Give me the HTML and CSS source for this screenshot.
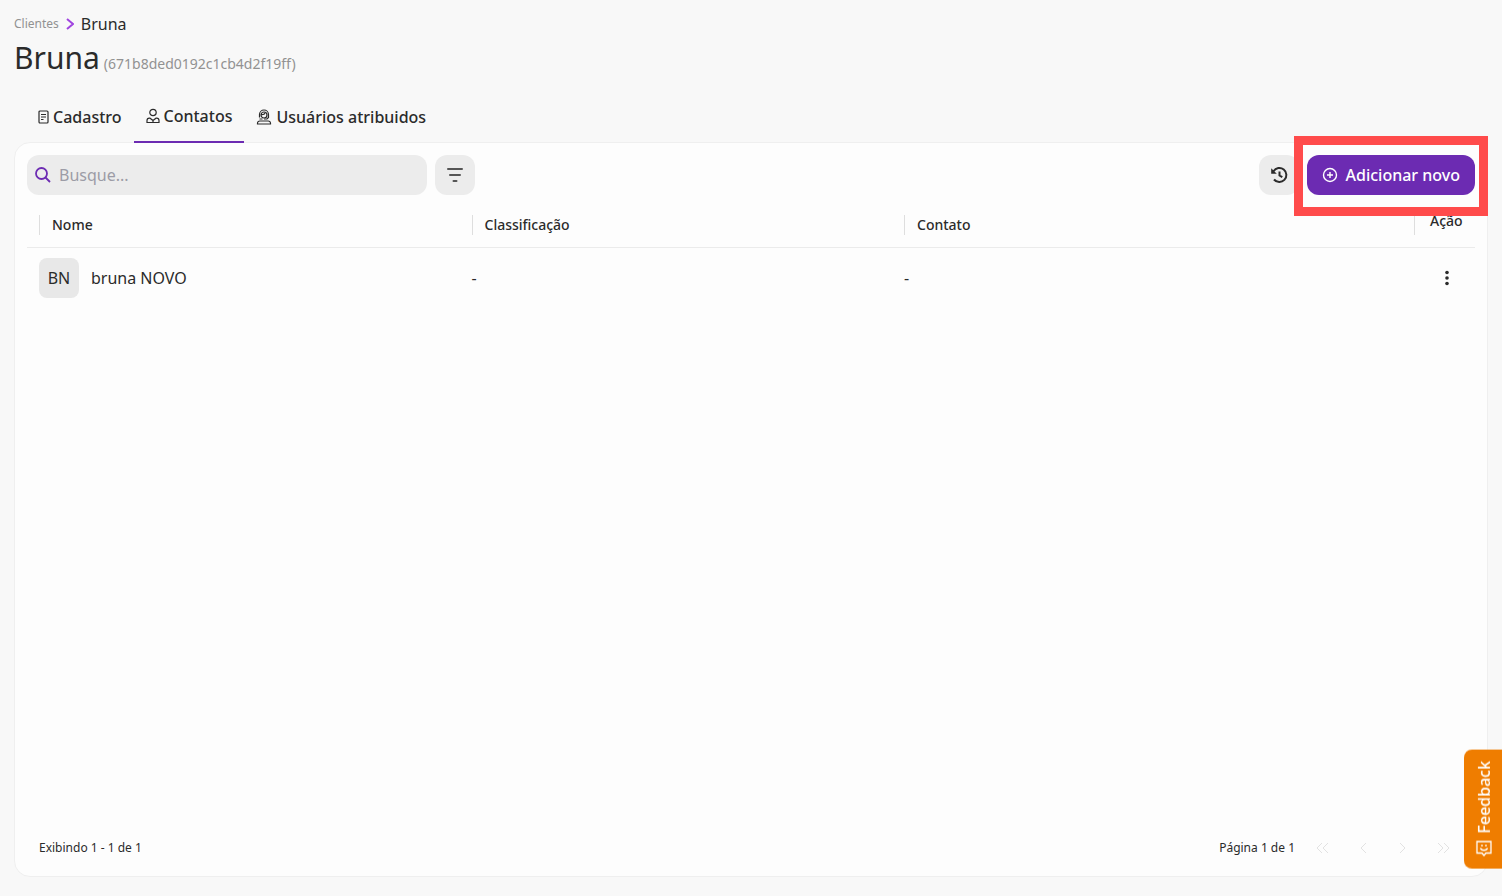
FILE: index.html
```html
<!DOCTYPE html>
<html lang="pt-BR">
<head>
    <meta charset="UTF-8">
    <meta name="viewport" content="width=device-width, initial-scale=1.0">
    <title>Bruna - Clientes</title>
    <link rel="stylesheet" href="styles.css">
</head>
<body>
    <header>
        <nav class="breadcrumb" aria-label="Navegação">
            <a href="#clientes">Clientes</a>
            <svg width="8" height="12" viewBox="0 0 8 12"><path d="M1 1l6 5-6 5"/></svg>
            <span>Bruna</span>
        </nav>
        <div class="title">
            <h1>Bruna</h1>
            <span class="client-id">(671b8ded0192c1cb4d2f19ff)</span>
        </div>
    </header>

    <nav class="tabs">
        <a href="#cadastro" class="tab">
            <svg width="12" height="14" viewBox="0 0 12 14"><rect x="1" y="1" width="9" height="12" rx="1"/><path d="M3 4.500h5M3 7h5M3 9.500h2.500"/></svg>
            Cadastro
        </a>
        <a href="#contatos" class="tab active">
            <svg width="14" height="16" viewBox="0 0 14 16"><circle cx="7" cy="4.500" r="3.200"/><path d="M1 14.500v-2a2.300 2.300 0 0 1 2.300-2.300h.7l3 2.300 3-2.300h.7a2.300 2.300 0 0 1 2.300 2.300v2zM7 12.500v2"/></svg>
            Contatos
        </a>
        <a href="#usuarios" class="tab">
            <svg width="16" height="16" viewBox="0 0 16 16"><circle cx="8" cy="6" r="3"/><path d="M3.500 8.500V5.500a4.500 4.500 0 0 1 9 0v3l-1.500 1.500H8M3.500 10h3M1.500 15v-.8a2.200 2.200 0 0 1 2.200-2.200h8.600a2.200 2.200 0 0 1 2.200 2.200v.8zM5 5.500c2 .3 3.500-.2 4.300-1.800"/></svg>
            Usuários atribuidos
        </a>
    </nav>

    <main class="panel">
        <div class="toolbar">
            <label class="search">
                <svg width="16" height="16" viewBox="0 0 16 16"><circle cx="6.500" cy="6.500" r="5.500"/><path d="M10.500 10.500l4.500 4.500"/></svg>
                <input type="text" placeholder="Busque..." aria-label="Busque">
            </label>
            <button type="button" class="icon-button" aria-label="Filtrar">
                <svg width="16" height="14" viewBox="0 0 16 14"><path class="filter" d="M1 1h14M3 7h10M6.500 13h3"/></svg>
            </button>
            <button type="button" class="icon-button history" aria-label="Histórico">
                <svg width="18" height="18" viewBox="0 0 18 18"><path d="M3.500 5.200A7 7 0 1 1 4 13.500M9.500 5.500V9.500l2.800 1.700"/><path class="solid" d="M1.200 2.200v5.600h5.600z"/></svg>
            </button>
            <div class="highlight">
                <button type="button" class="add-button">
                    <svg width="16" height="16" viewBox="0 0 16 16"><circle cx="8" cy="8" r="6.500"/><path d="M8 5v6M5 8h6"/></svg>
                    Adicionar novo
                </button>
            </div>
        </div>

        <table>
            <thead>
                <tr>
                    <th><span>Nome</span></th>
                    <th><span>Classificação</span></th>
                    <th class="col-contact"><span>Contato</span></th>
                    <th class="col-action"><span>Ação</span></th>
                </tr>
            </thead>
            <tbody>
                <tr>
                    <td>
                        <div class="person">
                            <span class="avatar">BN</span>
                            bruna NOVO
                        </div>
                    </td>
                    <td>-</td>
                    <td>-</td>
                    <td class="col-action">
                        <button type="button" class="menu-button" aria-label="Ações">
                            <svg width="4" height="16" viewBox="0 0 4 16"><circle cx="2" cy="2.500" r="1.800"/><circle cx="2" cy="8" r="1.800"/><circle cx="2" cy="13.500" r="1.800"/></svg>
                        </button>
                    </td>
                </tr>
            </tbody>
        </table>

        <footer>
            <span>Exibindo 1 - 1 de 1</span>
            <div class="pages">
                <span>Página 1 de 1</span>
                <button type="button" disabled aria-label="Primeira página"><svg width="14" height="12" viewBox="0 0 14 12"><path d="M6 1L1 6l5 5M12 1L7 6l5 5"/></svg></button>
                <button type="button" disabled aria-label="Página anterior"><svg width="14" height="12" viewBox="0 0 14 12"><path d="M10 1L5 6l5 5"/></svg></button>
                <button type="button" disabled aria-label="Próxima página"><svg width="14" height="12" viewBox="0 0 14 12"><path d="M4 1l5 5-5 5"/></svg></button>
                <button type="button" disabled aria-label="Última página"><svg width="14" height="12" viewBox="0 0 14 12"><path d="M2 1l5 5-5 5M8 1l5 5-5 5"/></svg></button>
            </div>
        </footer>
    </main>

    <button type="button" class="feedback">
        <svg width="16" height="16" viewBox="0 0 16 16"><path d="M1 1h14v11.500H10L8 15l-2-2.500H1z"/><path d="M4.500 7.500c1 3 6 3 7 0M6 4v2M10 4v2"/></svg>
        Feedback
    </button>
</body>
</html>
```
FILE: styles.css
```css
* {
    box-sizing: border-box;
}

body {
    display: flex;
    flex-direction: column;
    min-height: 100vh;
    margin: 0;
    padding: 12px 14px 19px;
    background: #f8f8f8;
    color: #2b2b2b;
    font-family: "Noto Sans", sans-serif;
    font-size: 16px;
    line-height: 24px;
}

a {
    color: inherit;
    text-decoration: none;
}

button {
    padding: 0;
    border: none;
    background: none;
    color: inherit;
    font: inherit;
    cursor: pointer;
}

svg {
    flex: none;
    fill: none;
    stroke: currentColor;
}

.breadcrumb {
    display: flex;
    align-items: center;
    gap: 7px;
}

.breadcrumb a {
    color: #929292;
    font-size: 12px;
}

.breadcrumb svg {
    stroke: #a044e0;
    stroke-width: 2;
}

.title {
    display: flex;
    align-items: baseline;
    gap: 4px;
}

h1 {
    margin: 0;
    font-size: 30px;
    font-weight: 400;
    line-height: 44px;
}

.client-id {
    color: #929292;
    font-size: 14px;
}

/* Tabs */
.tabs {
    display: flex;
    margin: 12px 0 0 12px;
}

.tab {
    display: flex;
    align-items: center;
    gap: 4px;
    height: 51px;
    padding: 0 12px 2px;
    font-weight: 500;
}

.tab:first-child {
    gap: 3px;
}

.tab svg {
    stroke-width: 1.2;
}

.tab.active {
    position: relative;
    z-index: 1;
    border-bottom: 2px solid #6c2bb2;
}

/* Panel */
.panel {
    display: flex;
    flex: 1;
    flex-direction: column;
    margin-top: -1px;
    padding: 12px;
    border: 1px solid #efefef;
    border-radius: 16px;
    background: #fdfdfd;
}

.toolbar {
    display: flex;
    gap: 8px;
}

.search {
    display: flex;
    align-items: center;
    gap: 8px;
    width: 400px;
    height: 40px;
    padding: 0 8px;
    border-radius: 12px;
    background: #ececec;
}

.search svg {
    stroke: #6c2bb2;
    stroke-width: 1.8;
}

.search input {
    flex: 1;
    min-width: 0;
    padding: 0;
    border: none;
    outline: none;
    background: none;
    font: inherit;
}

.search input::placeholder {
    color: #9c9ca6;
}

.icon-button {
    display: flex;
    align-items: center;
    justify-content: center;
    width: 40px;
    height: 40px;
    border-radius: 12px;
    background: #ececec;
}

.icon-button svg {
    stroke-width: 2;
}

.icon-button .filter {
    stroke: #555;
    stroke-linecap: round;
}

.solid {
    fill: currentColor;
    stroke: none;
}

.history {
    margin-left: auto;
}

.highlight {
    position: relative;
}

/* Red frame drawn over the toolbar and the table head */
.highlight::after {
    content: "";
    position: absolute;
    inset: -19px -13px -21px;
    border: 9px solid #ff4b4b;
    pointer-events: none;
}

.add-button {
    display: flex;
    align-items: center;
    gap: 8px;
    height: 40px;
    padding: 0 15px;
    border-radius: 12px;
    background: #6c2bb2;
    color: #fff;
    font-weight: 500;
}

.add-button svg {
    stroke-width: 1.4;
}

/* Table */
table {
    width: 100%;
    margin-top: 8px;
    border-collapse: collapse;
    table-layout: fixed;
}

th {
    height: 44px;
    padding: 0 12px;
    border-bottom: 1px solid #ebebeb;
    font-size: 14px;
    font-weight: 500;
    line-height: 20px;
    text-align: left;
}

th span {
    display: block;
    padding-left: 12px;
    border-left: 1px solid #dedede;
}

td {
    height: 61px;
    padding: 0 12px;
}

.col-contact {
    width: 510px;
}

.col-action {
    width: 73px;
}

th.col-action {
    padding-right: 0;
}

th.col-action span {
    padding-bottom: 8px;
    padding-left: 15px;
    line-height: 12px;
}

td.col-action {
    padding: 0 16px 0 0;
}

.person {
    display: flex;
    align-items: center;
    gap: 12px;
}

.avatar {
    width: 40px;
    border-radius: 8px;
    background: #e8e8e8;
    line-height: 40px;
    text-align: center;
}

.menu-button {
    display: block;
    width: 24px;
    margin-left: auto;
}

.menu-button svg {
    display: block;
    margin: auto;
    fill: currentColor;
    stroke: none;
}

footer {
    display: flex;
    align-items: center;
    justify-content: space-between;
    margin-top: auto;
    padding: 0 16px 0 12px;
    font-size: 12px;
    line-height: 32px;
}

.pages {
    display: flex;
    align-items: center;
    gap: 8px;
}

.pages button {
    display: flex;
    align-items: center;
    justify-content: center;
    width: 32px;
    height: 32px;
    color: #e2e2e2;
    cursor: default;
}

.pages span {
    margin-right: 4px;
}

.feedback {
    position: fixed;
    right: 0;
    bottom: 27px;
    display: flex;
    align-items: center;
    gap: 7px;
    padding: 12px 10px 11px 8px;
    border-radius: 0 8px 8px 0;
    background: #ef7d00;
    color: #fff;
    font-weight: 500;
    line-height: 20px;
    writing-mode: vertical-rl;
    transform: rotate(180deg);
}

.feedback svg {
    transform: rotate(180deg);
    stroke-width: 1.3;
}
```
